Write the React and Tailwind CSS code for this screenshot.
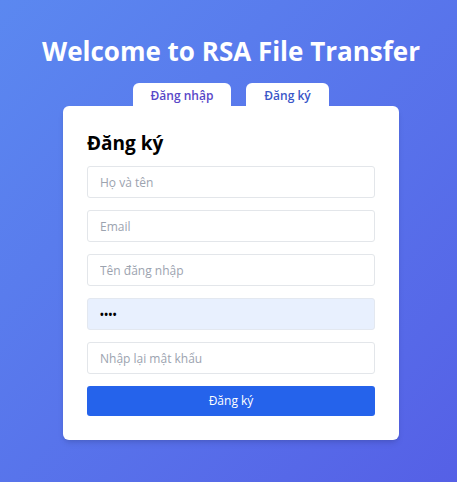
export default function App() {
  return (
    <div
      className="min-h-[482px] w-full bg-gradient-to-br from-[#5b88f0] to-[#5560e6] flex flex-col items-center pt-[34px] pl-[5px]"
      style={{ fontFamily: '"Open Sans", "Noto Sans", sans-serif' }}
    >
      <h1 className="text-white text-[26px] font-bold leading-[34px]">
        Welcome to RSA File Transfer
      </h1>

      <div className="w-[336px] mt-[15px]">
        {/* Tabs */}
        <div className="flex justify-center gap-[15px]">
          <button className="w-[98px] h-[23px] bg-white rounded-t-[6px] text-[12px] font-semibold text-[#5847c8] pt-[2px]">
            Đăng nhập
          </button>
          <button className="w-[83px] h-[23px] bg-white rounded-t-[6px] text-[12px] font-semibold text-[#3a56c8] pt-[2px]">
            Đăng ký
          </button>
        </div>

        {/* Card */}
        <div className="bg-white rounded-[6px] px-[24px] pt-[24px] pb-[24px] shadow-md">
          <h2 className="text-[19px] font-bold text-black leading-[26px] mb-[10px]">Đăng ký</h2>
          <div className="flex flex-col gap-[12px]">
            <Field placeholder="Họ và tên" />
            <Field placeholder="Email" />
            <Field placeholder="Tên đăng nhập" />
            <div className="h-[32px] rounded-[3px] border border-[#e3e8f0] bg-[#e8f0fe] flex items-center px-[12px] text-[10px] tracking-[0.5px] text-black font-bold leading-none">
              ••••
            </div>
            <Field placeholder="Nhập lại mật khẩu" />
            <button className="h-[30px] rounded-[3px] bg-[#2563eb] text-white text-[12px]">Đăng ký</button>
          </div>
        </div>
      </div>
    </div>
  );
}

function Field({ placeholder }) {
  return (
    <input
      type="text"
      placeholder={placeholder}
      className="h-[32px] w-full rounded-[3px] border border-[#e3e6ea] px-[12px] text-[12px] placeholder:text-[#9ca3af] outline-none"
    />
  );
}
